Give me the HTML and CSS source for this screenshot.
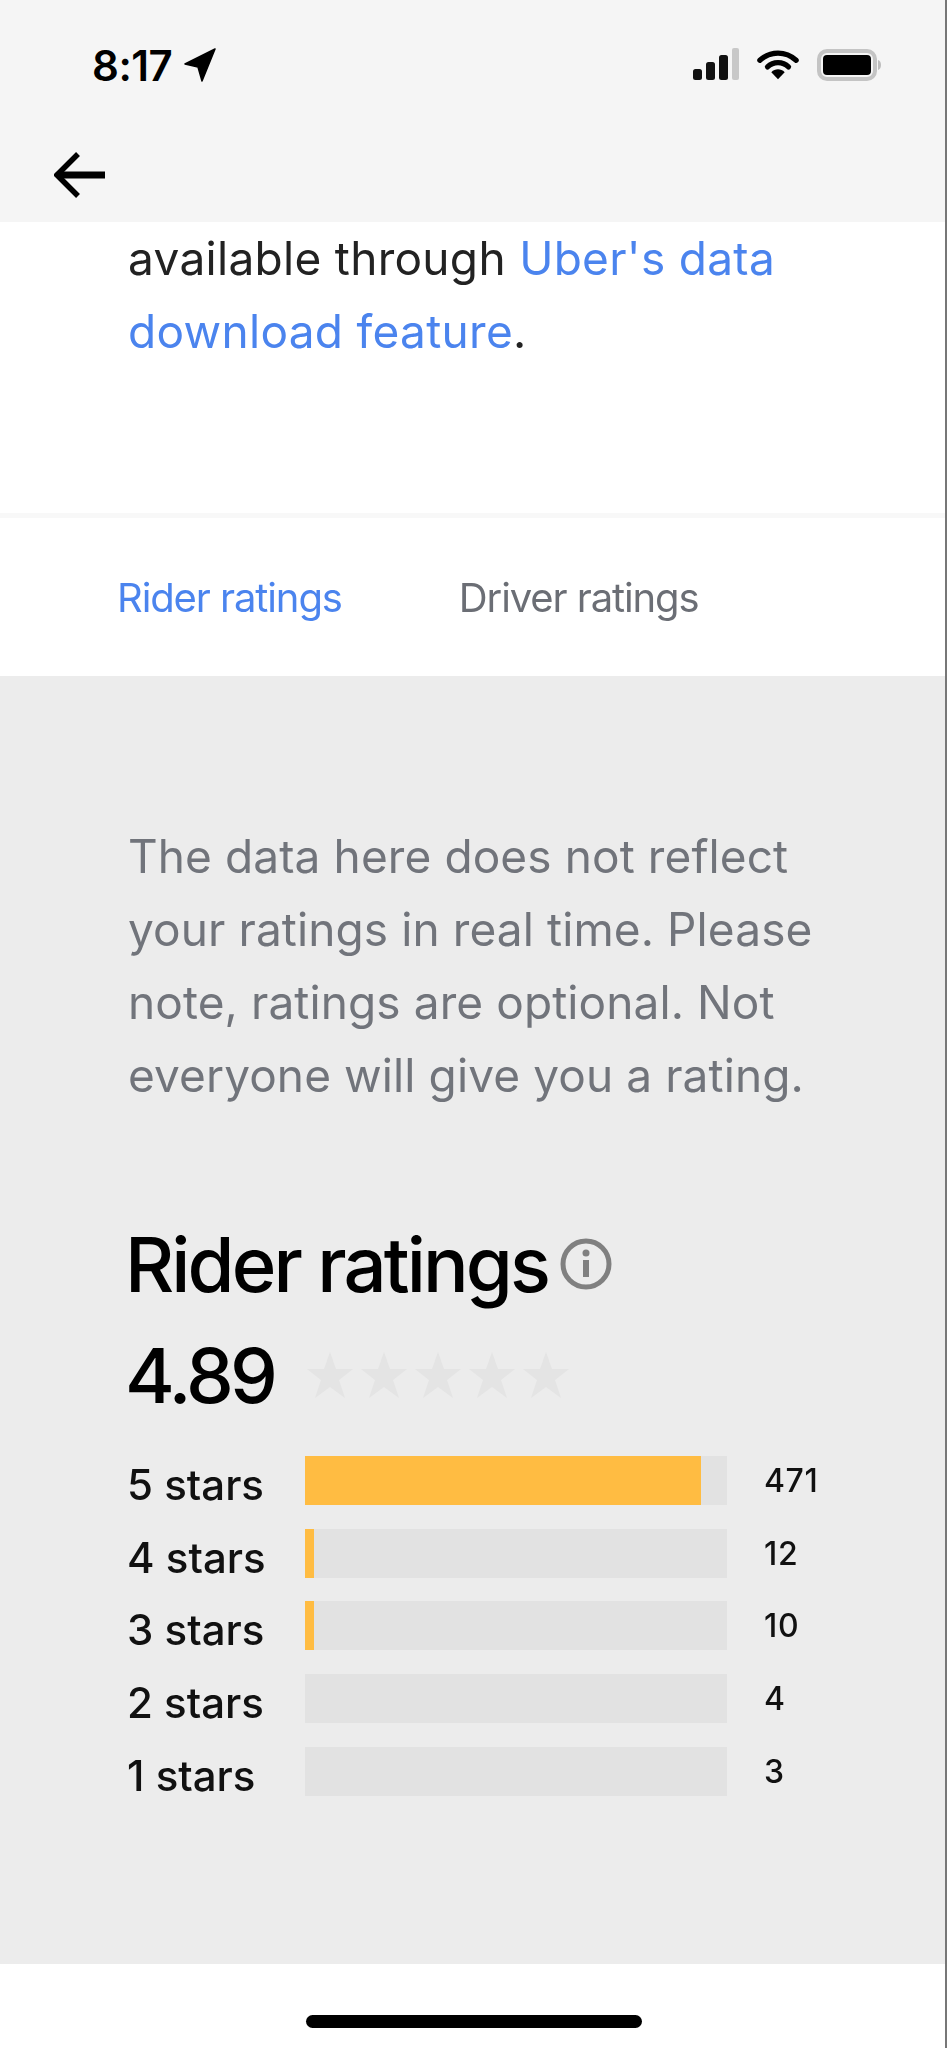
FILE: index.html
```html
<!DOCTYPE html>
<html lang="en">
<head>
    <meta charset="UTF-8">
    <meta name="viewport" content="width=device-width, initial-scale=1.0">
    <title>Ratings</title>
    <link rel="stylesheet" href="styles.css">
</head>
<body>
    <div class="phone">
        <div class="header">
            <div class="status-bar">
                <div class="clock">
                    <span>8:17</span>
                    <svg class="location" width="32" height="34" viewBox="0 0 32 34"><path d="M31 1 L1 16 L14 19 L18 33 Z" fill="#000" stroke="#000" stroke-width="1.5" stroke-linejoin="round"/></svg>
                </div>
                <div class="status-icons">
                    <svg width="46" height="34" viewBox="0 0 46 34">
                        <rect x="0" y="21" width="9" height="11" rx="2.5" fill="#111"/>
                        <rect x="13" y="14" width="9" height="18" rx="2.5" fill="#111"/>
                        <rect x="26" y="7" width="9" height="25" rx="2.5" fill="#111"/>
                        <rect x="39" y="0" width="7" height="32" rx="2" fill="#c8c8c8"/>
                    </svg>
                    <svg width="42" height="32" viewBox="0 0 44 32">
                        <path d="M3 11 C14 1 30 1 41 11" fill="none" stroke="#000" stroke-width="5.5" stroke-linecap="round"/>
                        <path d="M11 18 C17 12 27 12 33 18" fill="none" stroke="#000" stroke-width="5.5" stroke-linecap="round"/>
                        <path d="M15 23.5 C19 19.5 25 19.5 29 23.5 L22 31 Z" fill="#000"/>
                    </svg>
                    <svg width="66" height="32" viewBox="0 0 66 32">
                        <rect x="2" y="2" width="56" height="28" rx="8" fill="none" stroke="#c4c4c4" stroke-width="4"/>
                        <rect x="6" y="6" width="48" height="20" rx="4" fill="#000"/>
                        <path d="M61 11 C65 12 65 20 61 21 Z" fill="#bdbdbd"/>
                    </svg>
                </div>
            </div>
            <div class="nav">
                <svg width="52" height="46" viewBox="0 0 52 46"><path d="M51 23 H4" fill="none" stroke="#000" stroke-width="7"/><path d="M24 2 L3 23 L24 44" fill="none" stroke="#000" stroke-width="5.5"/></svg>
            </div>
        </div>

        <div class="intro">
            <p>available through <a href="#">Uber's data</a> <a href="#">download feature</a>.</p>
        </div>

        <ul class="tabs">
            <li class="active">Rider ratings</li>
            <li>Driver ratings</li>
        </ul>

        <div class="content">
            <p class="note">The data here does not reflect your ratings in real time. Please note, ratings are optional. Not everyone will give you a rating.</p>

            <h1>Rider ratings
                <svg class="info" width="52" height="52" viewBox="0 0 52 52">
                    <circle cx="26" cy="26" r="23" fill="none" stroke="#808080" stroke-width="5"/>
                    <circle cx="26" cy="15" r="3.5" fill="#808080"/>
                    <rect x="23" y="22" width="6" height="17" fill="#808080"/>
                </svg>
            </h1>

            <div class="score">
                <span class="value">4.89</span>
                <div class="stars">
                    <svg width="46" height="48" viewBox="0 0 46 48"><path class="star" d="M23 1 L29 18 H46 L32 29 L38 47 L23 36 L8 47 L14 29 L0 18 H17 Z"/></svg>
                    <svg width="46" height="48" viewBox="0 0 46 48"><path class="star" d="M23 1 L29 18 H46 L32 29 L38 47 L23 36 L8 47 L14 29 L0 18 H17 Z"/></svg>
                    <svg width="46" height="48" viewBox="0 0 46 48"><path class="star" d="M23 1 L29 18 H46 L32 29 L38 47 L23 36 L8 47 L14 29 L0 18 H17 Z"/></svg>
                    <svg width="46" height="48" viewBox="0 0 46 48"><path class="star" d="M23 1 L29 18 H46 L32 29 L38 47 L23 36 L8 47 L14 29 L0 18 H17 Z"/></svg>
                    <svg width="46" height="48" viewBox="0 0 46 48"><path class="star" d="M23 1 L29 18 H46 L32 29 L38 47 L23 36 L8 47 L14 29 L0 18 H17 Z"/></svg>
                </div>
            </div>

            <div class="breakdown">
                <div class="row">
                    <span class="label">5 stars</span>
                    <div class="track"><div class="fill" style="width: 396px"></div></div>
                    <span class="count">471</span>
                </div>
                <div class="row">
                    <span class="label">4 stars</span>
                    <div class="track"><div class="fill" style="width: 9px"></div></div>
                    <span class="count">12</span>
                </div>
                <div class="row">
                    <span class="label">3 stars</span>
                    <div class="track"><div class="fill" style="width: 9px"></div></div>
                    <span class="count">10</span>
                </div>
                <div class="row">
                    <span class="label">2 stars</span>
                    <div class="track"></div>
                    <span class="count">4</span>
                </div>
                <div class="row">
                    <span class="label">1 stars</span>
                    <div class="track"></div>
                    <span class="count">3</span>
                </div>
            </div>
        </div>

        <div class="footer">
            <div class="home-bar"></div>
        </div>
    </div>
</body>
</html>
```

FILE: styles.css
```css
html, body {
    margin: 0;
    padding: 0;
}

body {
    background: white;
    font-family: Inter, "Noto Sans", sans-serif;
    color: #111;
}

p, h1, ul {
    margin: 0;
    padding: 0;
}

/* the source is a soft upscaled capture */
.phone {
    width: 945px;
    height: 2048px;
    display: flex;
    flex-direction: column;
    border-right: 2px solid #777;
    overflow: hidden;
    filter: blur(0.7px);
}

/* Status bar and back arrow */
.header {
    height: 222px;
    background: #f5f5f5;
}

.status-bar {
    display: flex;
    justify-content: space-between;
    align-items: center;
    height: 40px;
    padding: 45px 62px 0 92px;
}

.clock {
    display: flex;
    align-items: center;
    gap: 12px;
    font-size: 42px;
    font-weight: 600;
    letter-spacing: -0.5px;
    color: #000;
}

.status-icons {
    display: flex;
    align-items: center;
    gap: 18px;
}

.nav {
    padding: 67px 0 0 54px;
}

.nav svg {
    display: block;
}

/* Intro text */
.intro {
    padding: 0 0 145px 128px;
    font-size: 46px;
    line-height: 73px;
    width: 680px;
    letter-spacing: 0.3px;
    color: #222;
}

.intro a {
    color: #4b84ee;
    text-decoration: none;
}

/* Tabs */
.tabs {
    display: flex;
    align-items: center;
    gap: 117px;
    height: 158px;
    padding-left: 117px;
    border-top: 5px solid #f8f8f8;
    list-style: none;
    font-size: 40px;
    letter-spacing: -1.1px;
    color: #6b6e75;
}

.tabs .active {
    color: #4b84ee;
}

/* Gray ratings panel */
.content {
    flex-grow: 1;
    background: #ececec;
    padding: 144px 0 0 128px;
}

.note {
    width: 720px;
    font-size: 46px;
    line-height: 73px;
    letter-spacing: 0.1px;
    color: #71747b;
}

h1 {
    display: flex;
    align-items: center;
    gap: 12px;
    margin: 106px 0 0 -3px;
    font-size: 76px;
    font-weight: 500;
    letter-spacing: -2.9px;
    color: #000;
}

.score {
    display: flex;
    align-items: center;
    margin: 19px 0 0 -3px;
}

.value {
    width: 182px;
    font-size: 76px;
    font-weight: 500;
    letter-spacing: -3.8px;
    color: #000;
}

.stars {
    display: flex;
    gap: 8px;
}

.star {
    fill: #e4e4e4;
}

/* Rating rows */
.breakdown {
    display: flex;
    flex-direction: column;
    gap: 23.7px;
    margin-top: 35px;
}

.row {
    display: grid;
    grid-template-columns: 177px 422px auto;
    height: 49px;
}

.label {
    padding-top: 4px;
    margin-left: -1px;
    font-size: 42px;
    font-weight: 500;
    line-height: 49px;
}

.track {
    height: 49px;
    background: #e2e2e2;
}

.fill {
    height: 100%;
    background: #ffbc42;
}

.count {
    padding-left: 37px;
    font-size: 32px;
    font-weight: 500;
    line-height: 49px;
    letter-spacing: 0.6px;
}

.footer {
    display: flex;
    justify-content: center;
    height: 84px;
}

.home-bar {
    width: 336px;
    height: 13px;
    margin: 51px 0 0 3px;
    border-radius: 7px;
    background: #000;
}
```
